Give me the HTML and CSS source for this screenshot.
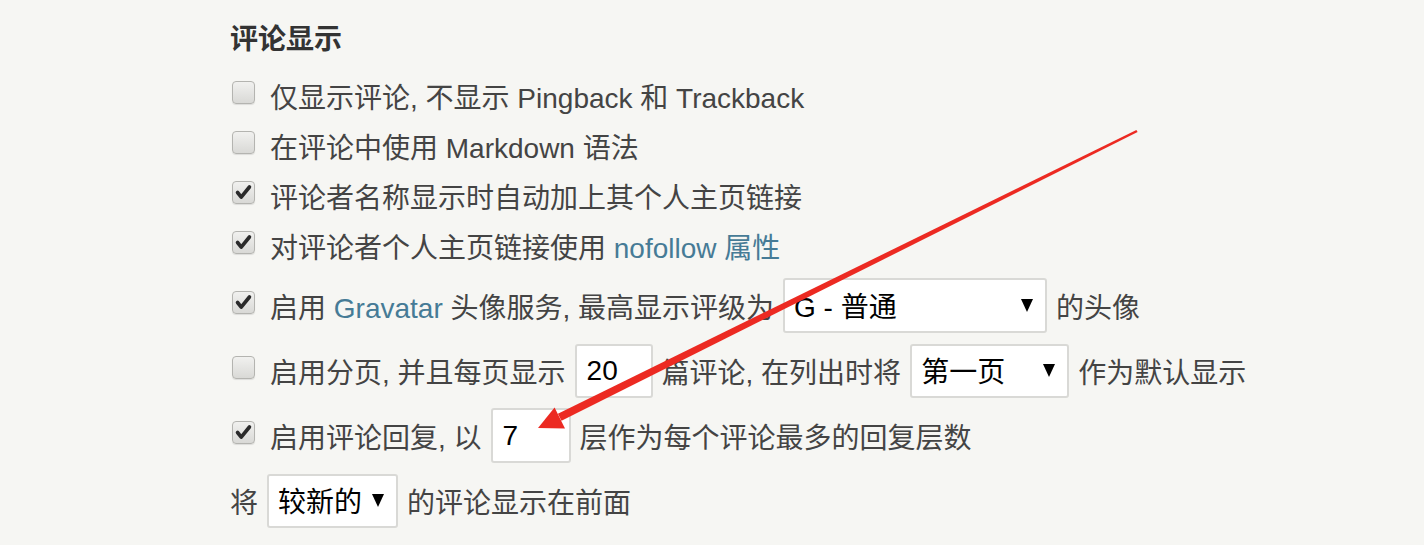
FILE: index.html
```html
<!DOCTYPE html>
<html lang="zh-CN">
  <head>
    <meta charset="UTF-8" />
    <meta name="viewport" content="width=device-width, initial-scale=1.0" />
    <title>评论显示</title>
    <link rel="stylesheet" href="styles.css">
  </head>
  <body>
    <div class="page">
      <h2 class="option-title">评论显示</h2>

      <ul class="option-list">
        <li class="option">
          <span class="checkbox"></span>
          <span>仅显示评论, 不显示 Pingback 和 Trackback</span>
        </li>
        <li class="option">
          <span class="checkbox"></span>
          <span>在评论中使用 Markdown 语法</span>
        </li>
        <li class="option">
          <span class="checkbox checked">
            <svg viewBox="0 0 23 23"><path d="M5 11.5 L9 16.5 L18 5.5" /></svg>
          </span>
          <span>评论者名称显示时自动加上其个人主页链接</span>
        </li>
        <li class="option">
          <span class="checkbox checked">
            <svg viewBox="0 0 23 23"><path d="M5 11.5 L9 16.5 L18 5.5" /></svg>
          </span>
          <span>对评论者个人主页链接使用 <a href="#">nofollow 属性</a></span>
        </li>
        <li class="option option-field">
          <span class="checkbox checked">
            <svg viewBox="0 0 23 23"><path d="M5 11.5 L9 16.5 L18 5.5" /></svg>
          </span>
          <span>启用 <a href="#">Gravatar</a> 头像服务, 最高显示评级为</span>
          <span class="select select-rating">
            <select>
              <option>G - 普通</option>
              <option>PG - 13岁以上</option>
              <option>R - 17岁以上成人</option>
              <option>X - 限制级</option>
            </select>
          </span>
          <span>的头像</span>
        </li>
        <li class="option option-field">
          <span class="checkbox"></span>
          <span>启用分页, 并且每页显示</span>
          <input class="text text-page" type="text" value="20" />
          <span>篇评论, 在列出时将</span>
          <span class="select select-page">
            <select>
              <option>第一页</option>
              <option>最后一页</option>
            </select>
          </span>
          <span>作为默认显示</span>
        </li>
        <li class="option option-field">
          <span class="checkbox checked">
            <svg viewBox="0 0 23 23"><path d="M5 11.5 L9 16.5 L18 5.5" /></svg>
          </span>
          <span>启用评论回复, 以</span>
          <input class="text text-level" type="text" value="7" />
          <span>层作为每个评论最多的回复层数</span>
        </li>
        <li class="option option-field">
          <span>将</span>
          <span class="select select-order">
            <select>
              <option>较新的</option>
              <option>较旧的</option>
            </select>
          </span>
          <span>的评论显示在前面</span>
        </li>
      </ul>
    </div>

    <!-- 红色箭头标注 -->
    <svg class="mark" viewBox="0 0 1424 545">
      <polygon points="1137.6,132.1 1136.4,129.9 557.9,413.7 561.5,420.7" />
      <polygon points="538,428 554.6,407.5 565.0,428.5" />
    </svg>
  </body>
</html>
```

FILE: styles.css
```css
/* 页面基础 */
body {
  margin: 0;
  background-color: #f6f6f3;
  color: #444;
  font-family: "Liberation Sans", "Noto Sans CJK SC", sans-serif;
  font-size: 28px;
  position: relative;
  height: 545px;
  overflow: hidden;
}

.page {
  padding: 20px 0 0 230px;
}

a {
  color: #467b96;
  text-decoration: none;
}

/* 标题 */
.option-title {
  margin: 0 0 11px;
  font-size: 28px;
  line-height: 40px;
  font-weight: bold;
  color: #333;
}

/* 选项列表 */
.option-list {
  list-style-type: none;
  margin: 0;
  padding: 0;
}

.option {
  display: flex;
  align-items: center;
  gap: 9px;
  height: 50px;
  white-space: nowrap;
}

.option-field {
  height: 55px;
  margin-top: 10px;
}

.option:nth-child(5) {
  margin-top: 7px;
}

/* 复选框 */
.checkbox {
  box-sizing: border-box;
  width: 23px;
  height: 23px;
  margin: 0 6px 7px 2px;
  border: 1px solid #b4b4b0;
  border-radius: 4px;
  background: linear-gradient(#f1f1ef, #d9d9d6);
  box-shadow: 0 1px 1px rgba(0, 0, 0, 0.1);
  display: flex;
}

.checkbox svg {
  width: 21px;
  height: 21px;
}

.checkbox path {
  fill: none;
  stroke: #2b2b2b;
  stroke-width: 4;
  stroke-linecap: round;
  stroke-linejoin: round;
}

/* 输入框 */
.text,
.select select {
  box-sizing: border-box;
  height: 55px;
  border: 2px solid #d9d9d6;
  border-radius: 3px;
  background-color: #fff;
  color: #000;
  font-family: inherit;
  font-size: 28px;
  padding: 0 10px;
  outline: none;
}

.text-page {
  width: 78px;
  height: 54px;
}

.text-level {
  width: 80px;
}

/* 下拉框 */
.select {
  position: relative;
  display: inline-block;
}

.select select {
  -webkit-appearance: none;
  appearance: none;
  padding: 4px 30px 0 9px;
  display: block;
}

.select::after {
  content: "";
  position: absolute;
  top: 50%;
  right: 14px;
  margin-top: -7px;
  border-left: 6px solid transparent;
  border-right: 6px solid transparent;
  border-top: 13px solid #000;
  pointer-events: none;
}

.select-rating select {
  width: 264px;
}

.select-page select {
  width: 159px;
  height: 54px;
}

.select-order select {
  width: 131px;
  height: 54px;
}

/* 标注 */
.mark {
  position: absolute;
  top: 0;
  left: 0;
  width: 1424px;
  height: 545px;
  pointer-events: none;
}

.mark polygon {
  fill: #ec2a22;
}
```
